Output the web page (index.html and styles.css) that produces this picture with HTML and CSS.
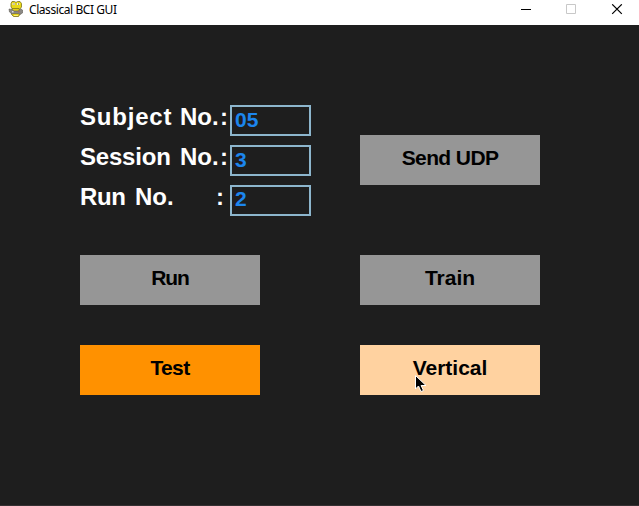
FILE: index.html
```html
<!DOCTYPE html>
<html lang="en">
<head>
<meta charset="utf-8">
<title>Classical BCI GUI</title>
<link rel="stylesheet" href="styles.css">
</head>
<body>
<header class="titlebar">
  <svg class="app-icon" width="16" height="18" viewBox="0 0 16 18">
    <path d="M4 1.500h2.500l1.500 1 1.500-1H12l1.500 2v3.500l-2 2.500H5L3 7V3.500z" fill="#e8d818" stroke="#7d7420" stroke-width=".8"/>
    <path d="M4 8.500h7l1.500 5-2 3h-5l-2-2z" fill="#e3d018" stroke="#7d7420" stroke-width=".8"/>
    <path d="M4.500 3h2.500v2H4.500zM9 3h2.500v2H9z" fill="#f7f4d0"/>
    <path d="M5.500 3.500h1v1h-1zM10 3.500h1v1h-1z" fill="#4c4930"/>
    <path d="M1 9l3 .5 2 1.500h4l3-2 1.500 1v3l-2.500 1.500-2-1H6l-2 .5-2.500-2z" fill="#8b8985" stroke="#605d55" stroke-width=".6"/>
    <path d="M4 11h1.500v1.500H4z" fill="#ddd"/><path d="M10 11h1.500v1.500H10z" fill="#b07050"/>
    <path d="M6 15.500h4" stroke="#fff27a"/>
  </svg>
  <span class="title">Classical BCI GUI</span>
  <svg class="controls" width="102" height="12" viewBox="0 0 102 12" fill="none">
    <path d="M0 5.500h10" stroke="#000"/>
    <path d="M45.500 .5h9v9h-9z" stroke="#c8c8c8"/>
    <path d="M91.200 .3l9.600 9.600M100.800 .3l-9.600 9.600" stroke="#000" stroke-width="1.200"/>
  </svg>
</header>
<main class="panel">
  <section class="fields">
    <label class="field"><span class="word subject">Subject</span><span class="no">No.</span><span class="colon">:</span><span class="box">05</span></label>
    <label class="field"><span class="word session">Session</span><span class="no">No.</span><span class="colon">:</span><span class="box">3</span></label>
    <label class="field"><span class="word run">Run</span><span class="no">No.</span><span class="colon">:</span><span class="box raised">2</span></label>
  </section>
  <div class="button send"><span>Send UDP</span></div>
  <div class="button"><span class="tight">Run</span></div>
  <div class="button"><span class="wide">Train</span></div>
  <div class="button test"><span>Test</span></div>
  <div class="button vertical"><span class="wide">Vertical</span>
    <svg class="cursor" width="12" height="18" viewBox="0 0 12 18"><path d="M.5.5v13.500l3-3 2.500 5.500 2.500-1-2.400-5H11z" fill="#000" stroke="#fff"/></svg>
  </div>
</main>
</body>
</html>
```
FILE: styles.css
```css
* { box-sizing: border-box; }
body {
  margin: 0;
  width: 639px;
  height: 506px;
  overflow: hidden;
  background: #1e1e1e;
  font-family: "Liberation Sans", Arial, sans-serif;
}
.titlebar {
  display: flex;
  align-items: flex-start;
  height: 25px;
  padding: 0 16px 0 8px;
  background: #fff;
}
.title {
  margin-left: 5px;
  font: 12px/19px "Noto Sans", sans-serif;
  letter-spacing: -0.43px;
  color: #000;
}
.controls { margin: 4px 0 0 auto; }
.panel {
  display: grid;
  grid-template-columns: 180px 180px;
  grid-template-rows: 120px 50px 50px;
  column-gap: 100px;
  row-gap: 40px;
  height: 481px;
  padding: 70px 80px 0;
  align-content: start;
  border-bottom: 1px solid #353032;
}
.fields {
  width: 231px;
  padding-top: 10px;
}
.field {
  display: flex;
  height: 40px;
  color: #fff;
  font-weight: bold;
  font-size: 24px;
  line-height: 24px;
  white-space: pre;
}
.word { width: 100px; }
.subject { letter-spacing: 0.8px; }
.session { letter-spacing: -0.2px; }
.run { width: 55px; letter-spacing: -0.4px; }
.no { width: 40px; }
.run + .no { width: 81px; }
.colon { width: 10px; }
.box {
  flex: none;
  width: 81px;
  height: 31px;
  margin-left: auto;
  padding: 1px 3px;
  border: 2px solid #8db6cd;
  color: #1c86ee;
  font-size: 21px;
}
.raised { padding-top: 0; }
.button {
  position: relative;
  display: flex;
  justify-content: center;
  height: 50px;
  padding-top: 11px;
  background: #969696;
  color: #000;
  font-weight: bold;
  font-size: 21px;
  line-height: 24px;
  letter-spacing: -0.6px;
}
.send { margin-top: 40px; }
.test { background: #ff9100; }
.vertical { background: #ffd2a0; }
.wide { letter-spacing: 0; }
.tight { letter-spacing: -1.1px; }
.cursor {
  position: absolute;
  left: 55px;
  top: 30px;
}
```
